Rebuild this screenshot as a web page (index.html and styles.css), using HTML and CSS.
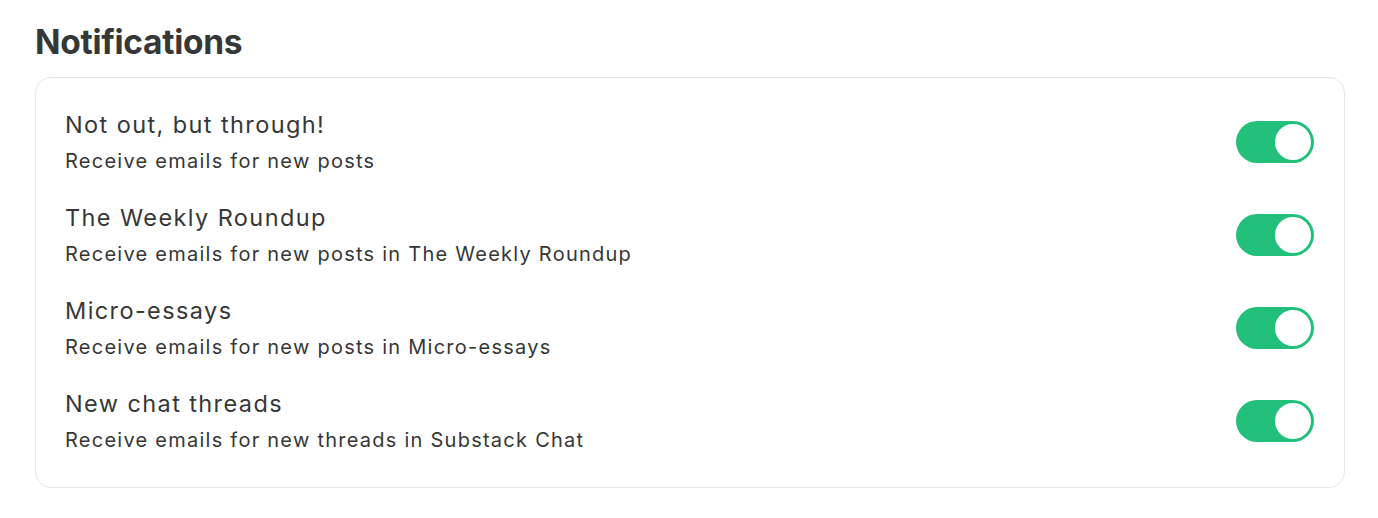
FILE: index.html
```html
<!DOCTYPE html>
<html lang="en">
<head>
<meta charset="utf-8">
<title>Notifications</title>
<link rel="stylesheet" href="styles.css">
</head>
<body>
<main class="page">
  <h1 class="heading">Notifications</h1>
  <section class="card">
    <div class="row">
      <div class="text">
        <div class="title">Not out, but through!</div>
        <div class="sub">Receive emails for new posts</div>
      </div>
      <span class="toggle on"><span class="knob"></span></span>
    </div>
    <div class="row">
      <div class="text">
        <div class="title">The Weekly Roundup</div>
        <div class="sub">Receive emails for new posts in The Weekly Roundup</div>
      </div>
      <span class="toggle on"><span class="knob"></span></span>
    </div>
    <div class="row">
      <div class="text">
        <div class="title">Micro-essays</div>
        <div class="sub">Receive emails for new posts in Micro-essays</div>
      </div>
      <span class="toggle on"><span class="knob"></span></span>
    </div>
    <div class="row">
      <div class="text">
        <div class="title">New chat threads</div>
        <div class="sub">Receive emails for new threads in Substack Chat</div>
      </div>
      <span class="toggle on"><span class="knob"></span></span>
    </div>
  </section>
</main>
</body>
</html>
```
FILE: styles.css
```css
* { box-sizing: border-box; }
html, body { margin: 0; padding: 0; background: #ffffff; }
body {
  font-family: Inter, "Noto Sans", "Liberation Sans", sans-serif;
  color: #363737;
}
.page {
  width: 1310px;
  margin-left: 35px;
  padding-top: 22px;
}
.heading {
  margin: 0 0 15px 0;
  font-size: 33.5px;
  line-height: 40px;
  font-weight: 700;
  color: #363737;
  letter-spacing: -0.3px;
}
.card {
  border: 1px solid #e6e6e6;
  border-radius: 16px;
  padding: 31px 30px 33px 29px;
  display: flex;
  flex-direction: column;
  gap: 27px;
}
.row {
  display: flex;
  align-items: center;
  justify-content: space-between;
}
.text { display: flex; flex-direction: column; gap: 6px; }
.title {
  font-size: 23.5px;
  line-height: 32px;
  letter-spacing: 1.4px;
  color: #363737;
}
.sub {
  font-size: 20px;
  line-height: 28px;
  letter-spacing: 1.25px;
  color: #363737;
}
.toggle {
  width: 78px;
  height: 42px;
  border-radius: 21px;
  background: #22c07b;
  display: flex;
  align-items: center;
  justify-content: flex-end;
  padding: 3px;
}
.knob {
  width: 36px;
  height: 36px;
  border-radius: 50%;
  background: #ffffff;
}
```
